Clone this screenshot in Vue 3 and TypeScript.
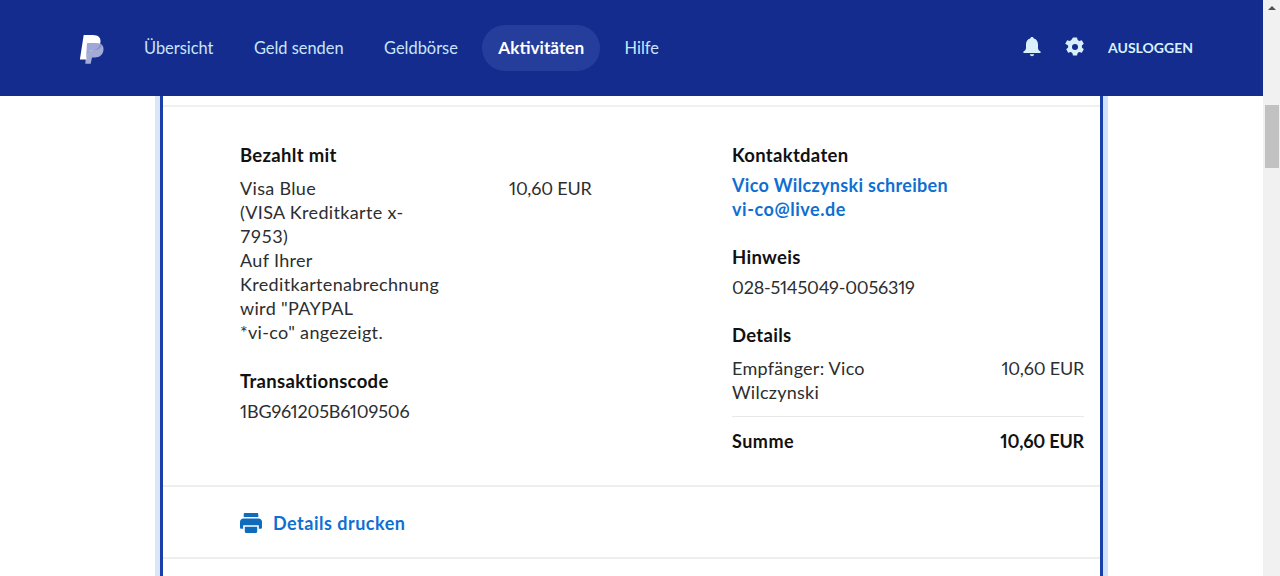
<script setup lang="ts">
const nav = [
  { label: 'Übersicht', active: false },
  { label: 'Geld senden', active: false },
  { label: 'Geldbörse', active: false },
  { label: 'Aktivitäten', active: true },
  { label: 'Hilfe', active: false },
]
</script>

<template>
  <div class="window">
    <div class="page">
      <header class="top">
        <svg class="logo" width="26" height="30" viewBox="0 0 26 30">
          <path d="M8 9h9.500c4.500 0 7.500 2.500 7 7-.6 4.800-4 7.500-8.500 7.500h-3L11.700 29.800H6.300z" fill="#a3abd9" />
          <path d="M4.700 1h9.300c5.200 0 8.300 2.700 7.400 7.700-.9 5-4.700 7.800-9.700 7.800H9L7.500 25.500H.9z" fill="#ffffff" />
          <path d="M8 9h9.500c2.500 0 4.500.8 5.700 2.300-1.500 3.400-5 5.200-9.200 5.200H9.700L6.900 25.500z" fill="#7f89c9" opacity=".75" />
        </svg>
        <nav class="nav">
          <a v-for="item in nav" :key="item.label" class="nav-item" :class="{ active: item.active }">{{ item.label }}</a>
        </nav>
        <div class="actions">
          <svg class="bell" width="18" height="20" viewBox="0 0 18 20">
            <path d="M9 0c1 0 1.700.7 1.800 1.600C13.700 2.400 15 4.700 15 7.500v3.200c0 1.700.9 2.900 2.400 3.800.5.300.6 1.500-.4 1.500H1c-1 0-.9-1.200-.4-1.500C2.100 13.600 3 12.400 3 10.700V7.500C3 4.700 4.300 2.400 7.200 1.600 7.300.7 8 0 9 0z" fill="#d8f0fc" />
            <path d="M6.800 17.300h4.400C10.900 18.500 10 19.200 9 19.200s-1.900-.7-2.200-1.900z" fill="#d8f0fc" />
          </svg>
          <svg class="gear" width="20" height="20" viewBox="0 0 20 20">
            <path fill-rule="evenodd" fill="#d8f0fc" d="M8 .5h4l.7 2.600 1.500.9 2.600-.7 2 3.400-1.900 1.900v1.800l1.900 1.900-2 3.400-2.600-.7-1.500.9-.7 2.600H8l-.7-2.600-1.500-.9-2.600.7-2-3.400 1.900-1.900V8.600L.2 6.700l2-3.400 2.600.7 1.500-.9zM10 7a3 3 0 1 0 0 6 3 3 0 0 0 0-6z" />
          </svg>
          <span class="logout">AUSLOGGEN</span>
        </div>
      </header>

      <div class="rail">
        <section class="card">
          <div class="body">
            <div class="col-left">
              <h3 class="head">Bezahlt mit</h3>
              <div class="pay">
                <p class="pay-text">Visa Blue<br />(VISA Kreditkarte x-<br />7953)<br />Auf Ihrer<br />Kreditkartenabrechnung<br />wird "PAYPAL<br />*vi-co" angezeigt.</p>
                <span class="num amount">10,60 EUR</span>
              </div>
              <h3 class="head code-head">Transaktionscode</h3>
              <p class="code num">1BG961205B6109506</p>
            </div>
            <div class="col-right">
              <h3 class="head">Kontaktdaten</h3>
              <a class="link first-link">Vico Wilczynski schreiben</a>
              <a class="link mail">vi-co@live.de</a>
              <h3 class="head block">Hinweis</h3>
              <p class="code num long">028-5145049-0056319</p>
              <h3 class="head block">Details</h3>
              <div class="line">
                <span class="recipient">Empfänger: Vico Wilczynski</span>
                <span class="num amount">10,60 EUR</span>
              </div>
              <div class="line total">
                <span class="sum">Summe</span>
                <span class="num amount">10,60 EUR</span>
              </div>
            </div>
          </div>
          <div class="print">
            <svg width="22" height="20" viewBox="0 0 22 20">
              <path fill="#0f6cbd" d="M5 0h12c.8 0 1.300.5 1.300 1.200V4H3.700V1.200C3.700.5 4.200 0 5 0zM3.500 5.500h15C20.500 5.500 22 7 22 9v5.500c0 .8-.6 1.300-1.300 1.300h-1.900V12.200H3.200v3.600H1.300C.6 15.800 0 15.300 0 14.500V9c0-2 1.500-3.500 3.500-3.500zM4.800 13.700h12.400v4.800c0 .9-.6 1.500-1.500 1.500H6.300c-.9 0-1.500-.6-1.500-1.500z" />
            </svg>
            <a class="print-link">Details drucken</a>
          </div>
        </section>
      </div>
    </div>
    <aside class="scrollbar">
      <span class="arrow"></span>
      <span class="thumb"></span>
    </aside>
  </div>
</template>

<style>
html, body { margin: 0; overflow: hidden; background: #fff; }
</style>

<style scoped>
.window {
  display: flex;
  height: 576px;
  overflow: hidden;
  font-family: Lato, "Liberation Sans", sans-serif;
  font-size: 18px;
  line-height: 24px;
  letter-spacing: .12px;
  color: #2c2e2f;
}
.num { font-variant-numeric: proportional-nums; white-space: nowrap; letter-spacing: -.15px; }
.num.long { letter-spacing: -.2px; }
.num.amount { letter-spacing: -.2px; }
.page { flex: 1; min-width: 0; display: flex; flex-direction: column; }
.top {
  flex: none;
  height: 96px;
  background: #142c8e;
  display: flex;
  align-items: center;
  padding: 0 70px 0 79px;
}
.logo { flex: none; margin-right: 23px; margin-top: 1px; }
.nav { display: flex; align-items: center; gap: 8.500px; }
.nav-item {
  padding: 0 16px;
  height: 46px;
  display: flex;
  align-items: center;
  border-radius: 23px;
  color: #c9e6fb;
  font-size: 16.400px;
  letter-spacing: 0;
}
.nav-item.active { background: #263e9b; color: #fff; font-weight: 700; font-size: 17.200px; }
.actions { margin-left: auto; display: flex; align-items: center; }
.bell { margin-right: 24px; margin-top: -2px; }
.gear { margin-right: 23px; margin-top: -2px; }
.logout { color: #d8f0fc; font-size: 14px; font-weight: 700; letter-spacing: 0; }
.rail {
  flex: 1;
  min-height: 0;
  width: 953px;
  margin-left: 155px;
  border-left: 5px solid #dbe6fa;
  border-right: 5px solid #d0e2fd;
  box-sizing: border-box;
}
.card {
  height: 100%;
  box-sizing: border-box;
  border-left: 3px solid #1a3fa8;
  border-right: 3px solid #1a3fa8;
  padding-top: 9px;
}
.body {
  border-top: 2px solid #f0f0ee;
  border-bottom: 2px solid #eeeeec;
  height: 378px;
  padding-left: 77px;
  padding-right: 16px;
  display: flex;
}
.col-left { width: 353px; margin-right: 139px; flex: none; }
.col-right { flex: 1; min-width: 0; display: flex; flex-direction: column; }
.head { margin: 0; padding-top: 36px; font-size: 18.500px; line-height: 24px; font-weight: 700; letter-spacing: .3px; color: #111; }
.head.block { padding-top: 24px; }
.head.code-head { padding-top: 25px; }
.pay { display: flex; margin-top: 9px; }
.pay-text { margin: 0; width: 205px; margin-right: 64px; flex: none; letter-spacing: .33px; }
.code { margin: 6px 0 0; }
.link { color: #0f6fd1; font-weight: 700; line-height: 24px; letter-spacing: .3px; }
.link.mail { letter-spacing: .55px; }
.first-link { margin-top: 6px; }
.line { display: flex; justify-content: space-between; margin-top: 9px; }
.recipient { width: 170px; letter-spacing: .25px; }
.total {
  margin-top: 12px;
  padding-top: 12px;
  border-top: 1px solid #e8e8e8;
  font-weight: 700;
  color: #111;
}
.sum { letter-spacing: .5px; }
.print {
  height: 70px;
  border-bottom: 2px solid #eeeeec;
  display: flex;
  align-items: center;
  gap: 11px;
  padding-left: 77px;
}
.print svg { margin-top: 1px; }
.print-link { color: #0f6fd1; font-weight: 700; font-size: 18px; letter-spacing: .5px; margin-top: 2px; }
.scrollbar {
  flex: none;
  width: 17px;
  background: #f1f1f1;
  display: flex;
  flex-direction: column;
  align-items: center;
}
.arrow {
  margin-top: 6px;
  border-left: 4px solid transparent;
  border-right: 4px solid transparent;
  border-bottom: 4px solid #505050;
}
.thumb { margin-top: 95px; width: 14px; height: 63px; background: #c1c1c1; }
</style>
